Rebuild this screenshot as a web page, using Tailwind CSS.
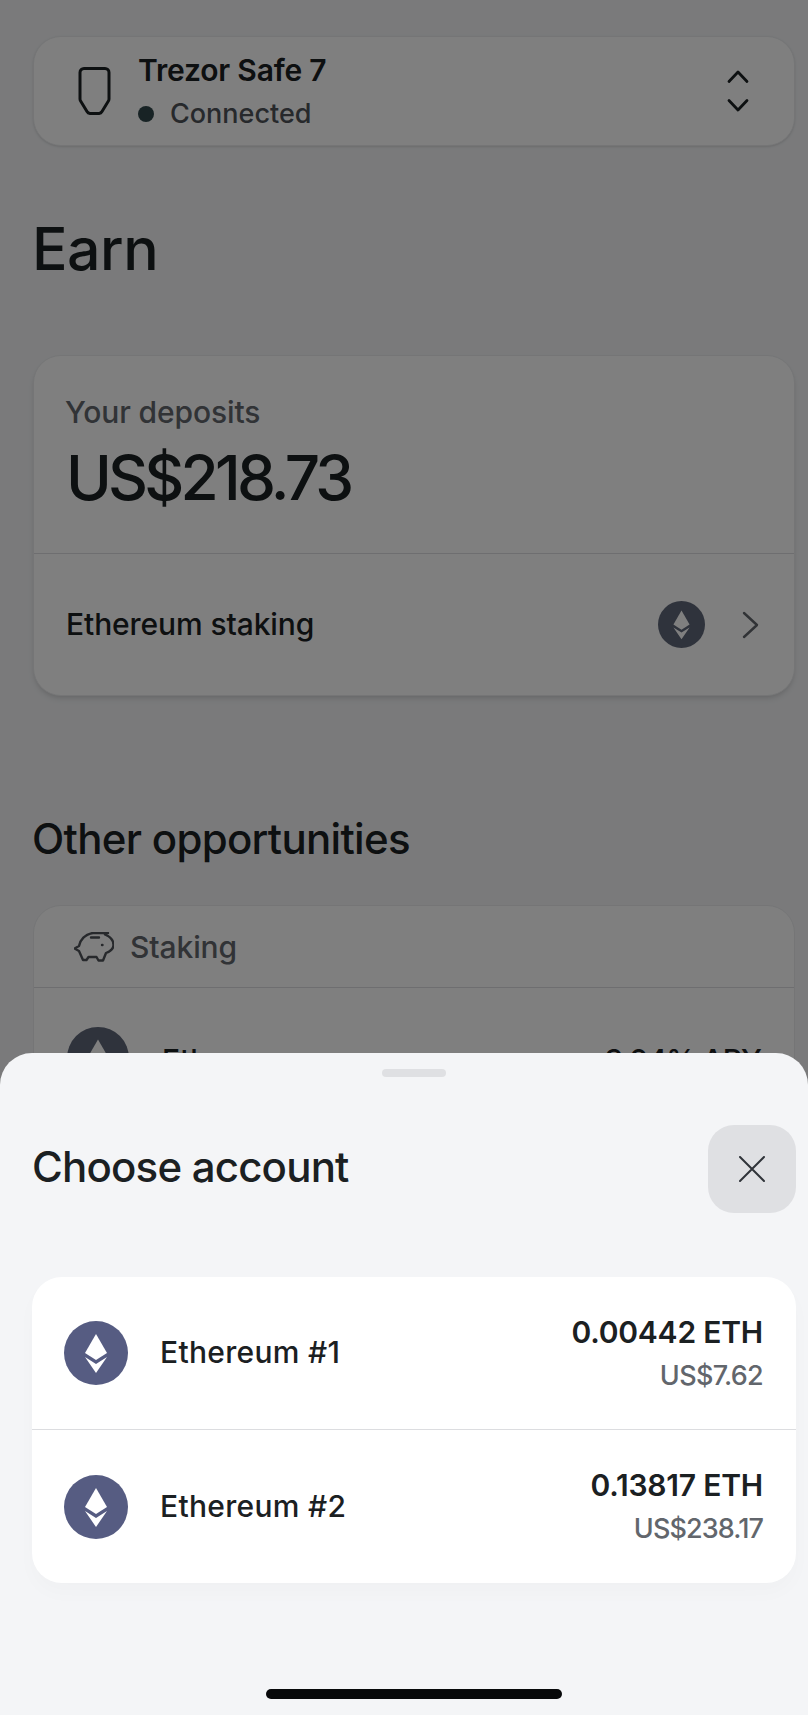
<!DOCTYPE html>
<html lang="en">
<head>
    <meta charset="UTF-8">
    <meta name="viewport" content="width=device-width, initial-scale=1.0">
    <title>Trezor Earn</title>
    <script src="https://cdn.jsdelivr.net/npm/@tailwindcss/browser@4"></script>
</head>
<body class="bg-[#f4f5f7]">
    <div class="relative h-[1715px] w-[808px] overflow-hidden bg-[#f4f5f7] font-['Inter',sans-serif] text-[#1b2022]">

        <!-- page behind the sheet -->
        <main class="flex flex-col pl-[33px] pr-[13px] pt-[36px]">
            <div class="flex h-[110px] items-center rounded-[28px] border border-[#eaebed] bg-white pl-[44px] pr-[44px] shadow-sm">
                <svg class="h-[50px] w-[33px]" viewBox="0 0 33 50" fill="none" stroke="#1b2022" stroke-width="3" stroke-linejoin="round">
                    <path d="M6 2.500h21a4 4 0 0 1 4 4V33a4 4 0 0 1-.6 2L24 45.500a4 4 0 0 1-3 2h-9a4 4 0 0 1-3-2L2.600 35a4 4 0 0 1-.6-2V6.500a4 4 0 0 1 4-4z"/>
                </svg>
                <div class="ml-[27px] flex flex-1 flex-col gap-[10px]">
                    <div class="text-[30px] leading-[36px] font-semibold tracking-[-0.2px]">Trezor Safe 7</div>
                    <div class="flex items-center gap-[16px] text-[#4e5258]">
                        <span class="h-[16px] w-[16px] rounded-full bg-[#30474a]"></span>
                        <span class="text-[27px] leading-[32px] font-[450]">Connected</span>
                    </div>
                </div>
                <svg class="h-[42px] w-[24px]" viewBox="0 0 24 42" fill="none" stroke="#1b2022" stroke-width="2.800" stroke-linecap="round" stroke-linejoin="round">
                    <path d="M3 11.500 12 2l9 9.500M3 30.500 12 40l9-9.500"/>
                </svg>
            </div>

            <h1 class="mt-[68px] -ml-px text-[59px] leading-[70px] font-[450] tracking-[-0.5px]">Earn</h1>

            <div class="mt-[71px] flex h-[341px] flex-col rounded-[28px] border border-[#eaebed] bg-white shadow-md">
                <div class="h-[198px] border-b border-[#dcdde0] pl-[31px] pt-[37px]">
                    <div class="text-[30px] leading-[38px] font-[450] tracking-[-0.1px] text-[#62666c]">Your deposits</div>
                    <div class="mt-[11px] ml-px text-[62px] leading-[72px] font-medium tracking-[-3.8px]">US$218.73</div>
                </div>
                <div class="flex flex-1 items-center pl-[32px] pr-[35px]">
                    <span class="-mt-[2px] flex-1 text-[30px] leading-[38px] font-[450] tracking-[-0.1px]">Ethereum staking</span>
                    <svg class="h-[47px] w-[47px]" viewBox="0 0 64 64">
                        <circle cx="32" cy="32" r="32" fill="#5e6678"/>
                        <path fill="#fff" d="M32 13 21 32l11 7 11-7z"/>
                        <path fill="#fff" d="m21 36 11 7 11-7-11 16z"/>
                    </svg>
                    <svg class="ml-[37px] h-[28px] w-[17px]" viewBox="0 0 17 28" fill="none" stroke="#62666c" stroke-width="2.400" stroke-linecap="round" stroke-linejoin="round">
                        <path d="m2 2 13 12L2 26"/>
                    </svg>
                </div>
            </div>

            <h2 class="mt-[118px] -ml-px text-[42px] leading-[50px] font-[450] tracking-[-0.7px]">Other opportunities</h2>

            <div class="mt-[41px] flex flex-col rounded-[28px] border border-[#eaebed] bg-white">
                <div class="flex h-[82px] items-center gap-[16px] border-b border-[#dcdde0] pl-[40px]">
                    <svg class="h-[30px] w-[40px]" viewBox="14 12 40 30" fill="none" stroke="#4e5258" stroke-width="2.400" stroke-linecap="round" stroke-linejoin="round">
                        <path d="M48 13H33c-8 1-13 7-14 13l-4.500 2.500L19 31l4 9h3.500l2-3h8l2 3.500H43l3-7.500c5-2 7.500-5 7.500-8 0-5-3.500-8.500-8.500-10.500"/>
                        <path d="M31 17.500h8M42 25h.5"/>
                    </svg>
                    <span class="text-[30px] leading-[38px] font-[450] tracking-[-0.1px] text-[#62666c]">Staking</span>
                </div>
                <div class="flex h-[140px] items-start pl-[33px] pr-[33px] pt-[39px]">
                    <svg class="h-[62px] w-[62px]" viewBox="0 0 64 64">
                        <circle cx="32" cy="32" r="32" fill="#5e6678"/>
                        <path fill="#fff" d="M32 13 21 32l11 7 11-7z"/>
                        <path fill="#fff" d="m21 36 11 7 11-7-11 16z"/>
                    </svg>
                    <span class="ml-[33px] flex-1 pt-[14px] text-[30px] leading-[38px] font-[450] tracking-[-0.1px]">Ethereum</span>
                    <span class="pt-[14px] text-[30px] leading-[38px] font-[450] tracking-[-0.9px]">3.04% APY</span>
                </div>
            </div>
        </main>

        <!-- dim layer -->
        <div class="absolute inset-0 bg-black/50"></div>

        <!-- bottom sheet -->
        <section class="absolute inset-x-0 bottom-0 flex h-[662px] flex-col rounded-t-[32px] bg-[#f4f5f7] pl-[32px] pr-[12px]">
            <div class="mt-[16px] ml-[350px] h-[8px] w-[64px] rounded-full bg-[#dfe0e3]"></div>
            <div class="mt-[48px] flex h-[88px] items-center justify-between">
                <h2 class="-mt-[4px] text-[42px] leading-[50px] font-[450] tracking-[-0.8px]">Choose account</h2>
                <button type="button" class="flex h-[88px] w-[88px] items-center justify-center rounded-[26px] bg-[#dfe0e3]">
                    <svg class="h-[26px] w-[26px]" viewBox="0 0 26 26" fill="none" stroke="#30343a" stroke-width="2" stroke-linecap="round">
                        <path d="m1 1 24 24M25 1 1 25"/>
                    </svg>
                </button>
            </div>

            <div class="mt-[64px] flex h-[306px] flex-col rounded-[30px] bg-white shadow-[0_10px_20px_rgba(0,0,0,0.02)]">
                <div class="flex h-[153px] items-center border-b border-[#dcdde0] pl-[32px] pr-[33px]">
                    <svg class="h-[64px] w-[64px]" viewBox="0 0 64 64">
                        <circle cx="32" cy="32" r="32" fill="#565c82"/>
                        <path fill="#fff" d="M32 13 21 32l11 7 11-7z"/>
                        <path fill="#fff" d="m21 36 11 7 11-7-11 16z"/>
                    </svg>
                    <span class="-mt-[2px] ml-[32px] flex-1 text-[30px] leading-[38px] font-[450] tracking-[0.3px]">Ethereum #1</span>
                    <div class="flex flex-col items-end gap-[9px]">
                        <span class="-mt-[2px] text-[30px] leading-[38px] font-semibold tracking-[-0.2px]">0.00442 ETH</span>
                        <span class="text-[27px] leading-[32px] font-[450] tracking-[-0.7px] text-[#62666c]">US$7.62</span>
                    </div>
                </div>
                <div class="flex flex-1 items-center pl-[32px] pr-[33px]">
                    <svg class="h-[64px] w-[64px]" viewBox="0 0 64 64">
                        <circle cx="32" cy="32" r="32" fill="#565c82"/>
                        <path fill="#fff" d="M32 13 21 32l11 7 11-7z"/>
                        <path fill="#fff" d="m21 36 11 7 11-7-11 16z"/>
                    </svg>
                    <span class="-mt-[2px] ml-[32px] flex-1 text-[30px] leading-[38px] font-[450] tracking-[0.3px]">Ethereum #2</span>
                    <div class="flex flex-col items-end gap-[9px]">
                        <span class="-mt-[2px] text-[30px] leading-[38px] font-semibold tracking-[-0.2px]">0.13817 ETH</span>
                        <span class="text-[27px] leading-[32px] font-[450] tracking-[-0.9px] text-[#62666c]">US$238.17</span>
                    </div>
                </div>
            </div>

            <div class="mt-[106px] ml-[234px] h-[10px] w-[296px] rounded-full bg-[#08090a]"></div>
        </section>
    </div>
</body>
</html>
